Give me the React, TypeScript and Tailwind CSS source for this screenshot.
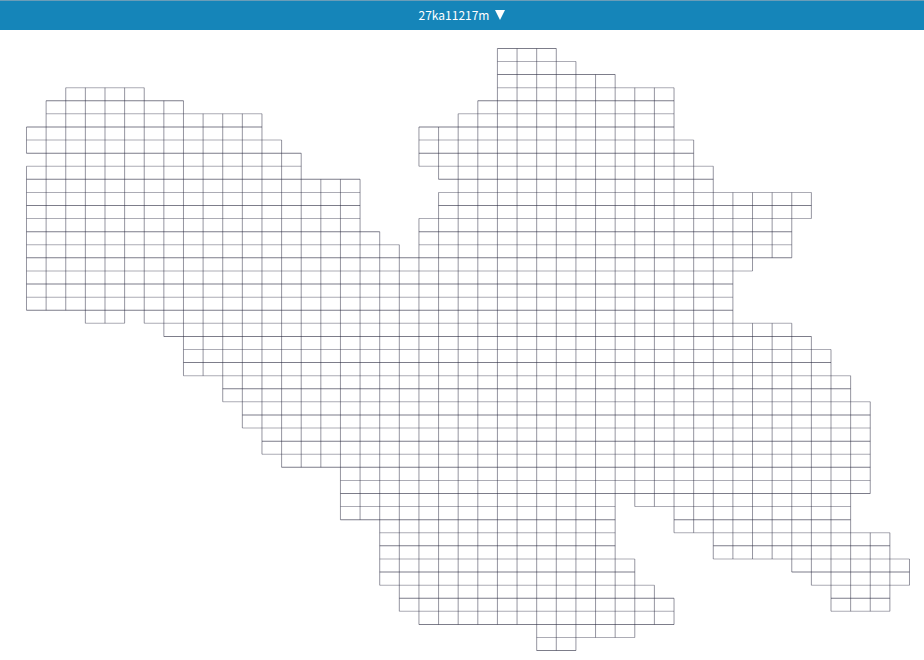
// Grid pitch and origin of the map sheet, in map units
const CELL_W = 19.622
const CELL_H = 13.091
const ORIGIN_X = 26.5
const ORIGIN_Y = 18.4

// Each row lists the [start, end) column spans that are covered by cells
const ROWS: [number, number][][] = [
  [[24, 27]],
  [[24, 28]],
  [[24, 30]],
  [[2, 6], [24, 33]],
  [[1, 8], [23, 33]],
  [[1, 12], [22, 33]],
  [[0, 12], [20, 33]],
  [[0, 13], [20, 34]],
  [[1, 14], [20, 34]],
  [[0, 14], [21, 35]],
  [[0, 17], [22, 35]],
  [[0, 17], [21, 40]],
  [[0, 17], [21, 40]],
  [[0, 17], [20, 39]],
  [[0, 18], [20, 39]],
  [[0, 19], [20, 39]],
  [[0, 37]],
  [[0, 36]],
  [[0, 36]],
  [[0, 36]],
  [[3, 5], [6, 36]],
  [[7, 39]],
  [[8, 40]],
  [[8, 41]],
  [[8, 41]],
  [[10, 42]],
  [[10, 42]],
  [[11, 43]],
  [[11, 43]],
  [[12, 43]],
  [[12, 43]],
  [[13, 43]],
  [[16, 43]],
  [[16, 43]],
  [[16, 30], [31, 42]],
  [[16, 30], [33, 42]],
  [[18, 30], [33, 42]],
  [[18, 30], [35, 44]],
  [[18, 30], [35, 44]],
  [[18, 31], [39, 45]],
  [[18, 31], [40, 45]],
  [[19, 32], [41, 44]],
  [[19, 33], [41, 44]],
  [[20, 33]],
  [[26, 31]],
  [[26, 28]],
]

const COLS = 45

function hasCell(row: number, col: number) {
  return (ROWS[row] ?? []).some(([from, to]) => col >= from && col < to)
}

function point(col: number, row: number) {
  return `${(ORIGIN_X + col * CELL_W).toFixed(2)} ${(ORIGIN_Y + row * CELL_H).toFixed(2)}`
}

// Shared edges are merged so that no line is stroked twice
function horizontalLines(firstRow: number) {
  const parts: string[] = []
  for (let row = firstRow; row <= ROWS.length; row += 2) {
    let start = -1
    for (let col = 0; col <= COLS; col++) {
      const edge = hasCell(row, col) || hasCell(row - 1, col)
      if (edge && start < 0) start = col
      if (!edge && start >= 0) {
        parts.push(`M${point(start, row)}L${point(col, row)}`)
        start = -1
      }
    }
  }
  return parts.join('')
}

function verticalLines() {
  const parts: string[] = []
  for (let col = 0; col <= COLS; col++) {
    let start = -1
    // one step past the last line, so that a run ending there is closed
    for (let row = 0; row <= ROWS.length; row++) {
      const edge = hasCell(row, col) || hasCell(row, col - 1)
      if (edge && start < 0) start = row
      if (!edge && start >= 0) {
        parts.push(`M${point(col, start)}L${point(col, row)}`)
        start = -1
      }
    }
  }
  return parts.join('')
}

export default function App() {
  return (
    <div className="min-h-screen bg-white">
      <header className="flex justify-center border-t border-[#6a9db8] bg-[#1585b9]">
        <button
          type="button"
          className="flex items-center gap-1.5 pb-[5px] pt-1 font-['Noto_Sans_CJK_JP',sans-serif] text-[12px] leading-5 text-white"
        >
          27ka11217m
          <svg viewBox="0 0 10 10" className="h-[10px] w-[10px]" fill="currentColor" aria-hidden="true">
            <path d="M0 0H10L5 10Z" />
          </svg>
        </button>
      </header>

      <main>
        <svg
          viewBox="0 0 924 630"
          className="block w-full"
          fill="none"
          stroke="#26263c"
          strokeWidth="1.01"
          role="img"
          aria-label="27ka11217m"
        >
          {/* Every second row line is drawn stronger */}
          <path d={horizontalLines(0)} strokeOpacity="0.6" />
          <path d={horizontalLines(1)} strokeOpacity="0.38" />
          <path d={verticalLines()} strokeOpacity="0.48" />
        </svg>
      </main>
    </div>
  )
}
